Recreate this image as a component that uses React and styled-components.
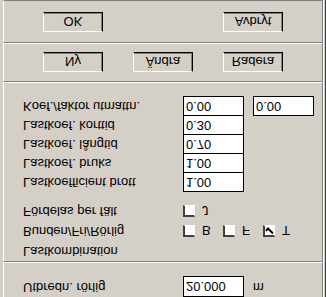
import React from 'react'
import styled, { createGlobalStyle } from 'styled-components'

const Global = createGlobalStyle`
  html, body { margin: 0; padding: 0; background: #d4d0c8; }
  body { font-family: "Liberation Sans", Arial, sans-serif; font-size: 13px; color: #000; }
`

// the whole dialog is shown upside down in the picture
const Window = styled.div`
  width: 326px;
  height: 297px;
  box-sizing: border-box;
  overflow: hidden;
  background: #d4d0c8;
  padding: 0 2px 0 3px;
  border-right: 1px solid #404040;
  transform: scaleY(-1);
  display: flex;
  flex-direction: column;
`

const Panel = styled.div`
  box-sizing: border-box;
  width: 320px;
  height: ${p => p.h}px;
  flex: none;
  border-left: 1px solid #fff;
  border-right: 1px solid #808080;
  border-top: ${p => (p.noTop ? '0' : '1px solid #808080')};
  border-bottom: 1px solid ${p => (p.last ? '#808080' : '#fff')};
  box-shadow: 1px 0 0 #fff;
  padding: ${p => p.pad || '0'};
  display: flex;
  flex-direction: column;
`

const Row = styled.div`
  display: grid;
  grid-template-columns: 160px 60px 10px 60px;
  align-items: start;
  height: ${p => p.h || 19}px;
  padding-left: 19px;
`

const Label = styled.span`
  line-height: 20px;
  white-space: nowrap;
`

const Field = styled.div`
  box-sizing: border-box;
  height: ${p => p.h || 20}px;
  width: 61px;
  background: #fff;
  border: 1px solid #000;
  padding-left: 2px;
  line-height: ${p => (p.h || 20) - 2}px;
  grid-column: ${p => p.col || 2};
`

const Unit = styled.span`
  grid-column: 4;
  line-height: 20px;
`

const Checks = styled.div`
  grid-column: 2 / 5;
  display: flex;
  align-items: center;
  height: 20px;
`

const Box = styled.span`
  box-sizing: border-box;
  width: 12px;
  height: 12px;
  background: #fff;
  border-top: 2px solid #404040;
  border-left: 2px solid #404040;
  border-right: 1px solid #fff;
  border-bottom: 1px solid #fff;
  display: inline-flex;
  align-items: center;
  justify-content: center;
  margin-left: ${p => p.ml || 0}px;
`

const BoxLetter = styled.span`
  margin-left: 7px;
  width: 12px;
`

const ButtonRow = styled.div`
  display: flex;
  gap: ${p => p.gap}px;
  padding-left: 39px;
`

const Button = styled.div`
  box-sizing: border-box;
  width: 60px;
  height: 20px;
  background: #d4d0c8;
  border: 1px solid;
  border-color: #fff #000 #000 #fff;
  box-shadow: inset -1px -1px 0 #808080;
  display: flex;
  align-items: center;
  justify-content: center;
  line-height: 1;
`

const Check = () => (
  <svg width="9" height="9" viewBox="0 0 9 9">
    <path d="M1 4 L3 6.5 L8 1.5" stroke="#000" strokeWidth="2" fill="none" />
  </svg>
)

const koef = [
  ['Lastkoefficient brott', '1.00'],
  ['Lastkoef. bruks', '1.00'],
  ['Lastkoef. långtid', '0.70'],
  ['Lastkoef. korttid', '0.30'],
]

export default function App() {
  return (
    <>
      <Global />
      <Window>
        <Panel h={35} noTop>
          <Row h={21}>
            <Label>Utbredn. rörlig</Label>
            <Field h={21}>20.000</Field>
            <Unit>m</Unit>
          </Row>
        </Panel>

        <Panel h={180}>
          <Row h={20}>
            <Label>Lastkombination</Label>
          </Row>
          <Row h={20}>
            <Label>Bunden/Fri/Rörlig</Label>
            <Checks>
              <Box />
              <BoxLetter>B</BoxLetter>
              <Box ml={9} />
              <BoxLetter>F</BoxLetter>
              <Box ml={9}><Check /></Box>
              <BoxLetter>T</BoxLetter>
            </Checks>
          </Row>
          <Row h={29}>
            <Label>Fördelas per fält</Label>
            <Checks>
              <Box />
              <BoxLetter>J</BoxLetter>
            </Checks>
          </Row>
          {koef.map(([label, value]) => (
            <Row key={label}>
              <Label>{label}</Label>
              <Field>{value}</Field>
            </Row>
          ))}
          <Row>
            <Label>Koef./faktor utmattn.</Label>
            <Field>0.00</Field>
            <Field col={4}>0.00</Field>
          </Row>
        </Panel>

        <Panel h={39} pad="9px 0 0 0">
          <ButtonRow gap={30}>
            <Button>Ny</Button>
            <Button>Ändra</Button>
            <Button>Radera</Button>
          </ButtonRow>
        </Panel>

        <Panel h={43} pad="10px 0 0 0" last>
          <ButtonRow gap={120}>
            <Button>OK</Button>
            <Button>Avbryt</Button>
          </ButtonRow>
        </Panel>
      </Window>
    </>
  )
}
